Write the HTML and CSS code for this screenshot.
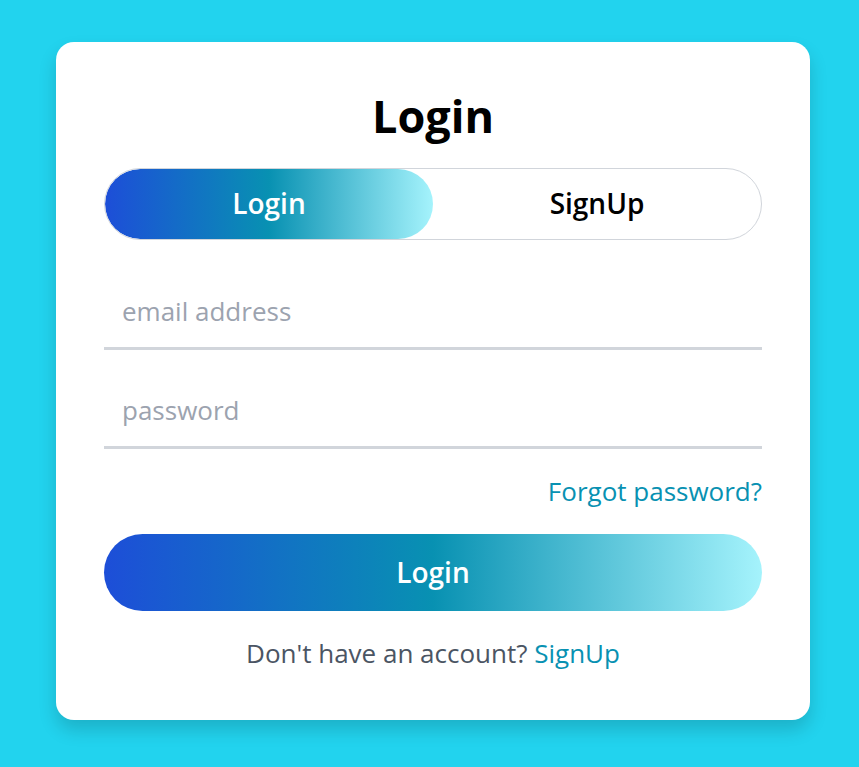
FILE: index.html
```html
<!DOCTYPE html>
<html lang="en">
<head>
<meta charset="utf-8">
<title>Login</title>
<link rel="stylesheet" href="styles.css">
</head>
<body>
<main class="page">
  <section class="card">
    <h1 class="title">Login</h1>
    <div class="toggle">
      <button class="tab tab-active">Login</button>
      <button class="tab">SignUp</button>
    </div>
    <form class="form">
      <input class="field" type="email" placeholder="email address">
      <input class="field" type="password" placeholder="password">
      <div class="forgot-row"><a class="link" href="#">Forgot password?</a></div>
      <button class="submit" type="button">Login</button>
      <p class="footer">Don't have an account? <a class="link" href="#">SignUp</a></p>
    </form>
  </section>
</main>
</body>
</html>
```

FILE: styles.css
```css
* { box-sizing: border-box; }
html, body { margin: 0; padding: 0; }
body {
  background: #22d3ee;
  font-family: "Open Sans", "DejaVu Sans", sans-serif;
  min-height: 767px;
}
.page {
  display: flex;
  justify-content: flex-start;
  padding: 42px 0 0 56px;
}
.card {
  width: 754px;
  background: #fff;
  border-radius: 18px;
  padding: 40px 48px 52px;
  box-shadow: 0 10px 18px rgba(0, 0, 0, 0.16);
}
.title {
  margin: 0;
  text-align: center;
  font-size: 45px;
  font-weight: 700;
  line-height: 68px;
  color: #000;
  height: 86px;
}
.toggle {
  display: flex;
  height: 72px;
  border: 1px solid #d1d5db;
  border-radius: 999px;
  overflow: hidden;
}
.tab {
  flex: 1;
  border: 0;
  padding: 0 0 2px;
  background: transparent;
  font-family: inherit;
  font-size: 28px;
  font-weight: 600;
  color: #000;
  border-radius: 999px;
}
.tab-active {
  color: #fff;
  background: linear-gradient(to right, #1d4ed8, #0891b2, #a5f3fc);
}
.form {
  display: flex;
  flex-direction: column;
  padding-top: 40px;
}
.field {
  height: 70px;
  border: 0;
  border-bottom: 3px solid #d1d5db;
  padding: 0 18px 5px;
  font-family: inherit;
  font-size: 26px;
  outline: none;
  margin-bottom: 29px;
}
.field::placeholder { color: #9ca3af; }
.forgot-row {
  display: flex;
  justify-content: flex-end;
  margin-top: -2px;
  line-height: 30px;
}
.link {
  color: #0891b2;
  text-decoration: none;
}
.forgot-row .link { font-size: 26px; }
.submit {
  margin-top: 28px;
  height: 77px;
  border: 0;
  padding: 0 0 2px;
  border-radius: 999px;
  background: linear-gradient(to right, #1d4ed8, #0891b2, #a5f3fc);
  color: #fff;
  font-family: inherit;
  font-size: 28px;
  font-weight: 600;
}
.footer {
  margin: 27px 0 0;
  text-align: center;
  font-size: 26px;
  line-height: 30px;
  color: #4b5563;
}
```
